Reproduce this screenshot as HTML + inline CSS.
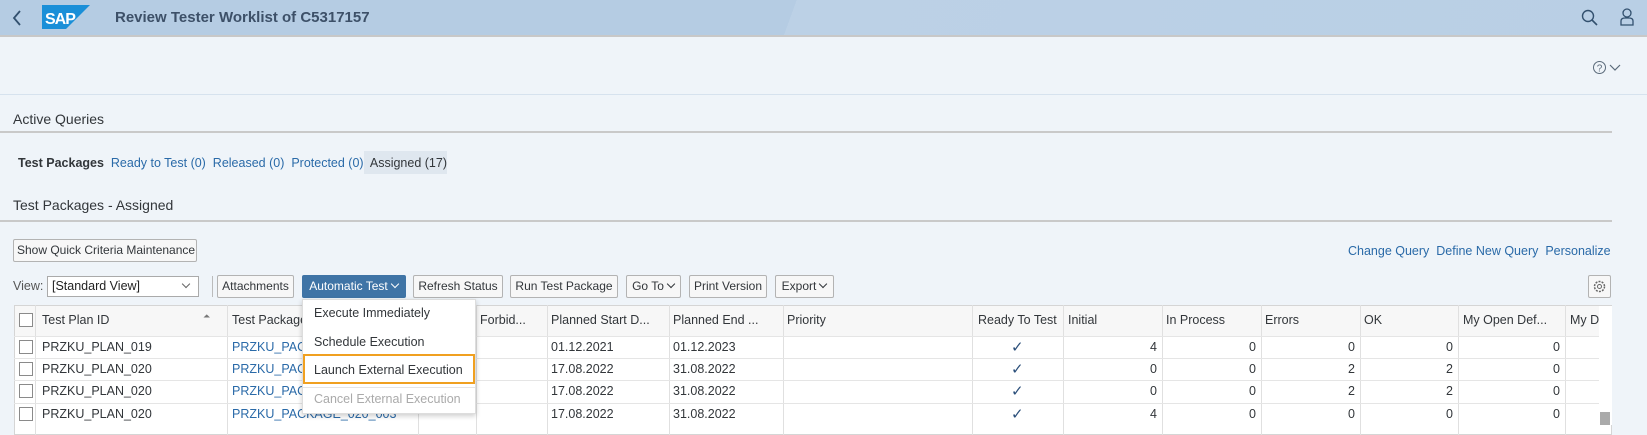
<!DOCTYPE html>
<html><head><meta charset="utf-8"><style>
*{margin:0;padding:0;box-sizing:border-box}
body{width:1647px;height:425px;overflow:hidden;background:#eff4f9;font-family:"Liberation Sans",sans-serif;font-size:12.5px;color:#32363a;position:relative}
.a{position:absolute;white-space:nowrap}
.hdr{left:0;top:0;width:1647px;height:37px;background:linear-gradient(110deg,#b5cce3 0%,#b5cce3 48%,#bcd1e6 48%,#b9cfe5 100%);border-bottom:2px solid #c8c8c8}
.lnk{color:#2a6aa8}
.btn{position:absolute;height:23px;border:1px solid #b3b3b3;border-radius:2px;background:#f7f7f7;line-height:21px;padding:0 3px;color:#32363a;font-size:12px;white-space:nowrap;text-align:center}
.chev{display:inline-block;width:6px;height:6px;border-right:1px solid currentColor;border-bottom:1px solid currentColor;transform:rotate(45deg);margin:0 1px 3px 4px}
.tbl{left:14px;top:305px;width:1598px;height:130px;background:#fff;border:1px solid #d5d5d5}
.vl{position:absolute;top:305px;height:130px;width:1px;background:#e0e0e0}
.hl{position:absolute;left:14px;width:1585px;height:1px;background:#e5e5e5}
.cb{position:absolute;left:19px;width:14px;height:14px;border:1px solid #8a8a8a;background:#fff}
.r{text-align:right}
.ck{color:#2b4f7a;font-size:15px}
</style></head><body>
<div class="a hdr"></div>
<svg class="a" style="left:11px;top:10px" width="12" height="16"><path d="M9 1 L3 8 L9 15" stroke="#32506e" stroke-width="1.8" fill="none"/></svg>
<svg class="a" style="left:42px;top:5px" width="48" height="24"><polygon points="0,0 48,0 24,24 0,24" fill="#1a8fd8"/><text x="3" y="19" font-family="Liberation Sans" font-weight="bold" font-size="16" fill="#fff" letter-spacing="-1">SAP</text></svg>
<div class="a" style="left:115px;top:9px;font-size:15px;font-weight:bold;color:#3d5068">Review Tester Worklist of C5317157</div>
<svg class="a" style="left:1580px;top:8px" width="20" height="20"><circle cx="8" cy="8" r="5.5" stroke="#32506e" stroke-width="1.4" fill="none"/><path d="M12 12 L17 17" stroke="#32506e" stroke-width="1.6"/></svg>
<svg class="a" style="left:1619px;top:7px" width="16" height="20"><circle cx="8" cy="6" r="4" stroke="#32506e" stroke-width="1.3" fill="none"/><path d="M2 18 V14 Q2 11 6 11 H10 Q14 11 14 14 V18 Z" stroke="#32506e" stroke-width="1.3" fill="none"/></svg>
<svg class="a" style="left:1592px;top:60px" width="36" height="16"><circle cx="7.5" cy="7.5" r="6" stroke="#5a6a7a" stroke-width="1" fill="none"/><text x="7.5" y="11.5" text-anchor="middle" font-size="10" font-family="Liberation Sans" fill="#5a6a7a">?</text><path d="M18 5 L23 10 L28 5" stroke="#5a6a7a" stroke-width="1.2" fill="none"/></svg>
<div class="a" style="left:0;top:94px;width:1647px;height:1px;background:#d6e2ee"></div>
<div class="a" style="left:13px;top:111px;font-size:14px">Active Queries</div>
<div class="a" style="left:0;top:131px;width:1612px;height:2px;background:#c9c9c9"></div>
<div class="a" style="left:364px;top:151px;width:83px;height:23px;background:#dfe7ef"></div>
<div class="a" style="left:18px;top:156px"><b>Test Packages</b>&nbsp; <span class="lnk">Ready to Test (0)</span>&nbsp; <span class="lnk">Released (0)</span>&nbsp; <span class="lnk">Protected (0)</span>&nbsp; <span>Assigned (17)</span></div>
<div class="a" style="left:13px;top:197px;font-size:14px">Test Packages - Assigned</div>
<div class="a" style="left:0;top:220px;width:1612px;height:2px;background:#c9c9c9"></div>
<div class="btn" style="left:13px;top:239px;width:184px">Show Quick Criteria Maintenance</div>
<div class="a lnk" style="left:1348px;top:244px">Change Query&nbsp;&nbsp;Define New Query&nbsp;&nbsp;Personalize</div>
<div class="a" style="left:13px;top:279px;color:#555">View:</div>
<div class="a" style="left:47px;top:276px;width:152px;height:21px;background:#fff;border:1px solid #aaa;padding:2px 4px;color:#222">[Standard View]<span class="chev" style="position:absolute;right:8px;top:4px;color:#666"></span></div>
<div class="a" style="left:212px;top:276px;width:1px;height:21px;background:#bbb"></div>
<div class="btn" style="left:217px;top:275px;width:77px">Attachments</div>
<div class="btn" style="left:302px;top:275px;width:104px;background:#3f74a6;border-color:#3f74a6;color:#fff">Automatic Test<span class="chev"></span></div>
<div class="btn" style="left:413px;top:275px;width:90px">Refresh Status</div>
<div class="btn" style="left:510px;top:275px;width:108px">Run Test Package</div>
<div class="btn" style="left:626px;top:275px;width:55px">Go To<span class="chev"></span></div>
<div class="btn" style="left:689px;top:275px;width:78px">Print Version</div>
<div class="btn" style="left:775px;top:275px;width:59px">Export<span class="chev"></span></div>
<div class="btn" style="left:1588px;top:275px;width:23px;padding:0"><svg width="21" height="21"><circle cx="10.5" cy="10.5" r="5" stroke="#666" stroke-width="1.5" stroke-dasharray="2 1.2" fill="none"/><circle cx="10.5" cy="10.5" r="2" stroke="#666" fill="none"/></svg></div>
<div class="a tbl"></div>
<div class="a" style="left:15px;top:306px;width:1584px;height:30px;background:#f7f7f7"></div>
<div class="vl" style="left:35px"></div><div class="vl" style="left:227px"></div><div class="vl" style="left:418px"></div><div class="vl" style="left:476px"></div><div class="vl" style="left:547px"></div><div class="vl" style="left:669px"></div><div class="vl" style="left:783px"></div><div class="vl" style="left:972px"></div><div class="vl" style="left:1063px"></div><div class="vl" style="left:1162px"></div><div class="vl" style="left:1261px"></div><div class="vl" style="left:1360px"></div><div class="vl" style="left:1458px"></div><div class="vl" style="left:1565px"></div>
<div class="hl" style="top:336px"></div><div class="hl" style="top:358px"></div><div class="hl" style="top:380px"></div><div class="hl" style="top:403px"></div>
<div class="a" style="left:1599px;top:306px;width:13px;height:119px;background:#fff"></div>
<div class="a" style="left:1600px;top:412px;width:10px;height:13px;background:#aaa"></div>
<div class="cb" style="top:313px"></div><div class="cb" style="top:340px"></div><div class="cb" style="top:362px"></div><div class="cb" style="top:384px"></div><div class="cb" style="top:407px"></div>
<div class="a" style="left:42px;top:313px">Test Plan ID</div>
<div class="a" style="left:203px;top:311px;font-size:9px;color:#777">⏶</div>
<div class="a" style="left:232px;top:313px">Test Package</div>
<div class="a" style="left:480px;top:313px">Forbid...</div>
<div class="a" style="left:551px;top:313px">Planned Start D...</div>
<div class="a" style="left:673px;top:313px">Planned End ...</div>
<div class="a" style="left:787px;top:313px">Priority</div>
<div class="a" style="left:978px;top:313px">Ready To Test</div>
<div class="a" style="left:1068px;top:313px">Initial</div>
<div class="a" style="left:1166px;top:313px">In Process</div>
<div class="a" style="left:1265px;top:313px">Errors</div>
<div class="a" style="left:1364px;top:313px">OK</div>
<div class="a" style="left:1463px;top:313px">My Open Def...</div>
<div class="a" style="left:1570px;top:313px">My D</div>

<div class="a" style="left:42px;top:340px">PRZKU_PLAN_019</div>
<div class="a" style="left:42px;top:362px">PRZKU_PLAN_020</div>
<div class="a" style="left:42px;top:384px">PRZKU_PLAN_020</div>
<div class="a" style="left:42px;top:407px">PRZKU_PLAN_020</div>
<div class="a lnk" style="left:232px;top:340px">PRZKU_PAC</div>
<div class="a lnk" style="left:232px;top:362px">PRZKU_PAC</div>
<div class="a lnk" style="left:232px;top:384px">PRZKU_PAC</div>
<div class="a lnk" style="left:232px;top:407px">PRZKU_PACKAGE_020_003</div>
<div class="a" style="left:551px;top:340px">01.12.2021</div><div class="a" style="left:673px;top:340px">01.12.2023</div>
<div class="a" style="left:551px;top:362px">17.08.2022</div><div class="a" style="left:673px;top:362px">31.08.2022</div>
<div class="a" style="left:551px;top:384px">17.08.2022</div><div class="a" style="left:673px;top:384px">31.08.2022</div>
<div class="a" style="left:551px;top:407px">17.08.2022</div><div class="a" style="left:673px;top:407px">31.08.2022</div>
<div class="a ck" style="left:1011px;top:338px">✓</div><div class="a ck" style="left:1011px;top:360px">✓</div><div class="a ck" style="left:1011px;top:382px">✓</div><div class="a ck" style="left:1011px;top:405px">✓</div>
<div class="a r" style="left:1100px;width:57px;top:340px">4</div><div class="a r" style="left:1200px;width:56px;top:340px">0</div><div class="a r" style="left:1300px;width:55px;top:340px">0</div><div class="a r" style="left:1400px;width:53px;top:340px">0</div><div class="a r" style="left:1500px;width:60px;top:340px">0</div>
<div class="a r" style="left:1100px;width:57px;top:362px">0</div><div class="a r" style="left:1200px;width:56px;top:362px">0</div><div class="a r" style="left:1300px;width:55px;top:362px">2</div><div class="a r" style="left:1400px;width:53px;top:362px">2</div><div class="a r" style="left:1500px;width:60px;top:362px">0</div>
<div class="a r" style="left:1100px;width:57px;top:384px">0</div><div class="a r" style="left:1200px;width:56px;top:384px">0</div><div class="a r" style="left:1300px;width:55px;top:384px">2</div><div class="a r" style="left:1400px;width:53px;top:384px">2</div><div class="a r" style="left:1500px;width:60px;top:384px">0</div>
<div class="a r" style="left:1100px;width:57px;top:407px">4</div><div class="a r" style="left:1200px;width:56px;top:407px">0</div><div class="a r" style="left:1300px;width:55px;top:407px">0</div><div class="a r" style="left:1400px;width:53px;top:407px">0</div><div class="a r" style="left:1500px;width:60px;top:407px">0</div>

<div class="a" style="left:302px;top:299px;width:174px;height:115px;background:#fff;border:1px solid #ddd;box-shadow:0 2px 5px rgba(0,0,0,.2)"></div>
<div class="a" style="left:314px;top:306px">Execute Immediately</div>
<div class="a" style="left:314px;top:335px">Schedule Execution</div>
<div class="a" style="left:303px;top:354px;width:172px;height:30px;border:2px solid #f0a020"></div>
<div class="a" style="left:314px;top:363px">Launch External Execution</div>
<div class="a" style="left:303px;top:387px;width:172px;height:1px;background:#e5e5e5"></div>
<div class="a" style="left:314px;top:392px;color:#aaa">Cancel External Execution</div>
</body></html>
